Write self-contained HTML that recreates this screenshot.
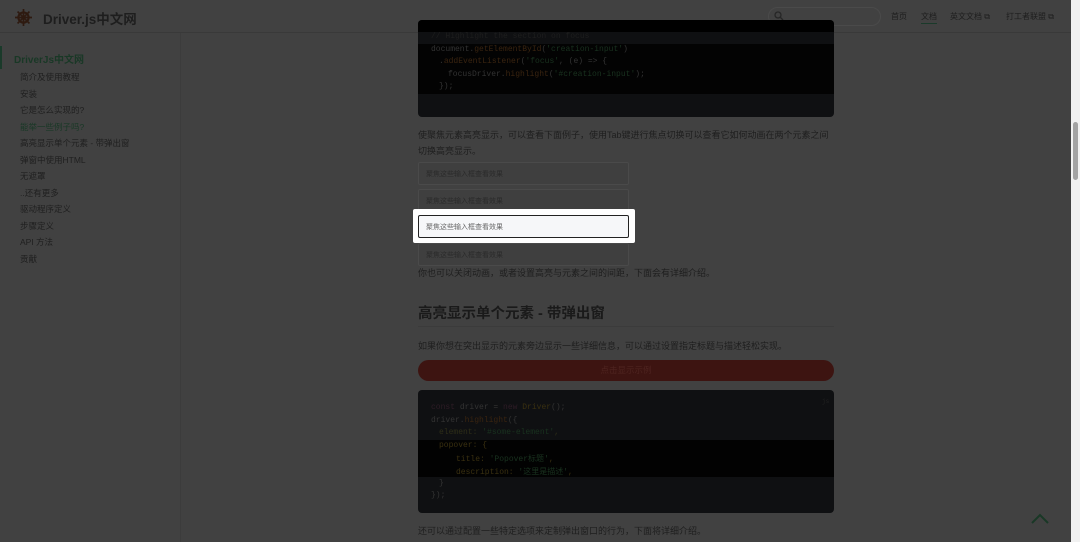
<!DOCTYPE html>
<html><head><meta charset="utf-8"><style>
*{margin:0;padding:0;box-sizing:border-box}
body{width:1080px;height:542px;overflow:hidden;background:#414141;font-family:"Liberation Sans","Noto Sans CJK SC",sans-serif;position:relative;color:#222}
.a{position:absolute;white-space:nowrap}
.mono{font-family:"Liberation Mono","Noto Sans CJK SC",monospace;font-size:8px}
.side{font-size:8.5px;color:#1f1f1f}
.p{font-size:9px;color:#1e1e1e}
.inp{position:absolute;left:418px;width:211px;height:23px;border:1px solid #4a4a4a;background:#3f3f3f;border-radius:2px;font-size:7px;color:#2a2a2a;padding:6px 7px}
</style></head><body>
<div class="a" style="left:0;top:32px;width:1071px;height:1px;background:#393939"></div>
<div class="a" style="left:180px;top:33px;width:1px;height:509px;background:#3c3c3c"></div>
<svg class="a" style="left:15px;top:9px" width="17" height="17" viewBox="0 0 20 20"><circle cx="10" cy="10" r="6" fill="none" stroke="#2e1a10" stroke-width="2.5"/><circle cx="10" cy="10" r="2" fill="#2e1a10"/><g stroke="#2e1a10" stroke-width="2"><line x1="10" y1="0" x2="10" y2="20"/><line x1="0" y1="10" x2="20" y2="10"/><line x1="3" y1="3" x2="17" y2="17"/><line x1="17" y1="3" x2="3" y2="17"/></g></svg>
<div class="a" style="left:43px;top:8px;font-size:13.5px;color:#1e1e1e;font-weight:bold">Driver.js中文网</div>
<div class="a" style="left:768px;top:7px;width:113px;height:19px;border:1px solid #4a4a4a;border-radius:10px"></div>
<svg class="a" style="left:774px;top:11px" width="10" height="10"><circle cx="4" cy="4" r="3" fill="none" stroke="#262626" stroke-width="1.3"/><line x1="6" y1="6" x2="9" y2="9" stroke="#262626" stroke-width="1.3"/></svg>
<div class="a" style="left:891px;top:11px;font-size:8px;color:#1e1e1e">首页</div>
<div class="a" style="left:921px;top:11px;font-size:8px;color:#1e1e1e">文档</div>
<div class="a" style="left:921px;top:23px;width:16px;height:1px;background:#1a3a2a"></div>
<div class="a" style="left:950px;top:11px;font-size:8px;color:#1e1e1e">英文文档 ⧉</div>
<div class="a" style="left:1006px;top:11px;font-size:8px;color:#1e1e1e">打工者联盟 ⧉</div>
<div class="a" style="left:0;top:46px;width:2px;height:23px;background:#1a3a2a"></div>
<div class="a" style="left:14px;top:51px;font-size:10px;color:#193826;font-weight:bold">DriverJs中文网</div>
<div class="a side" style="left:20px;top:71px">简介及使用教程</div>
<div class="a side" style="left:20px;top:88px">安装</div>
<div class="a side" style="left:20px;top:104px">它是怎么实现的?</div>
<div class="a side" style="left:20px;top:121px;color:#193826">能举一些例子吗?</div>
<div class="a side" style="left:20px;top:137px">高亮显示单个元素 - 带弹出窗</div>
<div class="a side" style="left:20px;top:154px">弹窗中使用HTML</div>
<div class="a side" style="left:20px;top:170px">无遮罩</div>
<div class="a side" style="left:20px;top:187px">..还有更多</div>
<div class="a side" style="left:20px;top:203px">驱动程序定义</div>
<div class="a side" style="left:20px;top:220px">步骤定义</div>
<div class="a side" style="left:20px;top:236px">API 方法</div>
<div class="a side" style="left:20px;top:253px">贡献</div>
<!-- code 1 -->
<div class="a" style="left:418px;top:20px;width:416px;height:97px;background:#0f1012;border-radius:4px;overflow:hidden">
<div class="a" style="left:0;top:0;width:416px;height:12px;background:#000"></div>
<div class="a" style="left:0;top:24px;width:416px;height:50px;background:#030303"></div>
</div>
<div class="a mono" style="left:431px;top:32px;color:#1e1e1e">// Highlight the section on focus</div>
<div class="a mono" style="left:431px;top:45px;color:#333">document.<span style="color:#3a2410">getElementById</span>(<span style="color:#19321f">'creation-input'</span>)</div>
<div class="a mono" style="left:439px;top:57px;color:#333">.<span style="color:#3a2410">addEventListener</span>(<span style="color:#19321f">'focus'</span>, (e) => {</div>
<div class="a mono" style="left:448px;top:70px;color:#333">focusDriver.<span style="color:#3a2410">highlight</span>(<span style="color:#19321f">'#creation-input'</span>);</div>
<div class="a mono" style="left:439px;top:82px;color:#333">});</div>
<div class="a p" style="left:418px;top:128px">使聚焦元素高亮显示，可以查看下面例子，使用Tab键进行焦点切换可以查看它如何动画在两个元素之间</div>
<div class="a p" style="left:418px;top:144px">切换高亮显示。</div>
<div class="inp" style="top:162px">聚焦这些输入框查看效果</div>
<div class="inp" style="top:189px">聚焦这些输入框查看效果</div>
<div class="inp" style="top:243px">聚焦这些输入框查看效果</div>
<div class="a" style="left:413px;top:209px;width:222px;height:34px;background:#fff;border-radius:2px"></div>
<div class="inp" style="top:215px;background:#f6f7f9;border:1px solid #222;color:#666">聚焦这些输入框查看效果</div>
<div class="a p" style="left:418px;top:266px">你也可以关闭动画，或者设置高亮与元素之间的间距，下面会有详细介绍。</div>
<div class="a" style="left:418px;top:302px;font-size:14.5px;font-weight:bold;color:#1a1a1a">高亮显示单个元素 - 带弹出窗</div>
<div class="a" style="left:418px;top:326px;width:416px;height:1px;background:#3b3b3b"></div>
<div class="a p" style="left:418px;top:339px">如果你想在突出显示的元素旁边显示一些详细信息，可以通过设置指定标题与描述轻松实现。</div>
<div class="a" style="left:418px;top:360px;width:416px;height:21px;background:#3d1411;border-radius:11px;text-align:center;font-size:8.5px;color:#4e2420;line-height:21px">点击显示示例</div>
<div class="a" style="left:418px;top:390px;width:416px;height:123px;background:#0f1012;border-radius:4px;overflow:hidden">
<div class="a" style="left:0;top:50px;width:416px;height:37px;background:#020202"></div>
</div>
<div class="a mono" style="left:822px;top:398px;color:#222;font-size:6px">js</div>
<div class="a mono" style="left:431px;top:403px;color:#333"><span style="color:#2e1c26">const</span> driver = <span style="color:#2e1c26">new</span> <span style="color:#3a3010">Driver</span>();</div>
<div class="a mono" style="left:431px;top:416px;color:#333">driver.<span style="color:#3a2410">highlight</span>({</div>
<div class="a mono" style="left:439px;top:428px;color:#2e2e18">element: <span style="color:#19321f">'#some-element'</span>,</div>
<div class="a mono" style="left:439px;top:441px;color:#3a3010">popover: {</div>
<div class="a mono" style="left:456px;top:453px;color:#3a3010">title: <span style="color:#19321f">'Popover标题'</span>,</div>
<div class="a mono" style="left:456px;top:466px;color:#3a3010">description: <span style="color:#19321f">'这里是描述'</span>,</div>
<div class="a mono" style="left:439px;top:479px;color:#333">}</div>
<div class="a mono" style="left:431px;top:491px;color:#333">});</div>
<div class="a p" style="left:418px;top:524px">还可以通过配置一些特定选项来定制弹出窗口的行为，下面将详细介绍。</div>
<svg class="a" style="left:1031px;top:513px" width="18" height="11"><polyline points="1,10 9,2 17,10" fill="none" stroke="#193826" stroke-width="2"/></svg>
<div class="a" style="left:1071px;top:0;width:9px;height:542px;background:#f1f1f1"></div>
<div class="a" style="left:1073px;top:122px;width:5px;height:58px;background:#a3a3a3;border-radius:3px"></div>
</body></html>
